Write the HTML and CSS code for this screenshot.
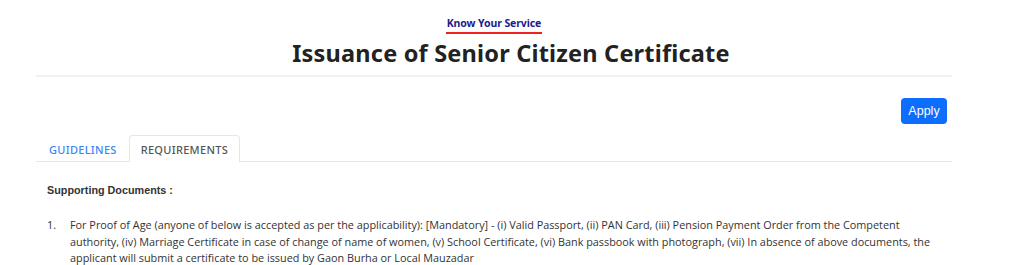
FILE: index.html
```html
<!DOCTYPE html>
<html lang="en">
<head>
<meta charset="utf-8">
<title>Issuance of Senior Citizen Certificate</title>
<link rel="stylesheet" href="styles.css">
</head>
<body>
<div class="page">
  <header class="head">
    <div class="kicker">Know Your Service</div>
    <h1 class="title">Issuance of Senior Citizen Certificate</h1>
  </header>
  <div class="actions">
    <button class="btn-apply" type="button">Apply</button>
  </div>
  <nav class="tabs">
    <a class="tab">GUIDELINES</a>
    <a class="tab active">REQUIREMENTS</a>
  </nav>
  <section class="content">
    <p class="sub">Supporting Documents :</p>
    <ol class="docs">
      <li class="doc"><span class="num">1.</span><span class="txt">For Proof of Age (anyone of below is accepted as per the applicability): [Mandatory] - (i) Valid Passport, (ii) PAN Card, (iii) Pension Payment Order from the Competent authority, (iv) Marriage Certificate in case of change of name of women, (v) School Certificate, (vi) Bank passbook with photograph, (vii) In absence of above documents, the applicant will submit a certificate to be issued by Gaon Burha or Local Mauzadar</span></li>
    </ol>
  </section>
</div>
</body>
</html>
```
FILE: styles.css
```css
* { box-sizing: border-box; }
html, body { margin: 0; padding: 0; background: #fff; }
body { font-family: "Open Sans", "Liberation Sans", sans-serif; color: #333; }
.page { margin: 0 72px 0 36px; }
.head {
  display: flex; flex-direction: column; align-items: center;
  padding-top: 15px;
  border-bottom: 2px solid #f1f1f1;
  padding-bottom: 8px;
}
.kicker {
  font-family: "Noto Sans", sans-serif;
  font-weight: 700; font-size: 10.5px; color: #1c1c8c;
  letter-spacing: -0.1px;
  line-height: 16px;
  padding: 0 1px 1px;
  border-bottom: 2px solid #ee2222;
}
.title {
  margin: 5px 0 0 34px;
  font-family: "Noto Sans", sans-serif;
  font-weight: 700; font-size: 23.5px; line-height: 28px; color: #222;
  letter-spacing: 0.2px;
}
.actions { display: flex; justify-content: flex-end; padding: 21px 5px 0 0; }
.btn-apply {
  font-family: "Liberation Sans", Arial, sans-serif; font-size: 12.5px;
  color: #fff; background: #0d6efd; border: 0; border-radius: 4px;
  width: 46px; height: 26px; padding: 0 0 1px;
}
.tabs {
  display: flex; margin-top: 11px; padding-left: 1px;
  border-bottom: 1px solid #e6e6e6;
}
.tab {
  font-family: "Noto Sans", sans-serif; font-size: 11px; font-weight: 500;
  letter-spacing: 0.3px;
  padding: 6px 11px 5px; line-height: 15px;
  border: 1px solid transparent; border-bottom: 0;
  border-radius: 4px 4px 0 0;
  color: #3b86f7;
  margin-bottom: -1px;
}
.tab.active { color: #555; border-color: #e6e6e6; background: #fff; }
.content { padding: 20px 7px 0 11px; }
.sub {
  margin: 0; font-family: "Liberation Sans", Arial, sans-serif; font-weight: 700;
  font-size: 10.8px; color: #333; line-height: 16px;
}
.docs {
  list-style: none;
  margin: 19px 0 0; padding: 0; font-size: 10.85px; line-height: 16.5px; color: #333;
}
.doc { display: flex; }
.num { flex: 0 0 23px; }
.txt { flex: 1; }
```
